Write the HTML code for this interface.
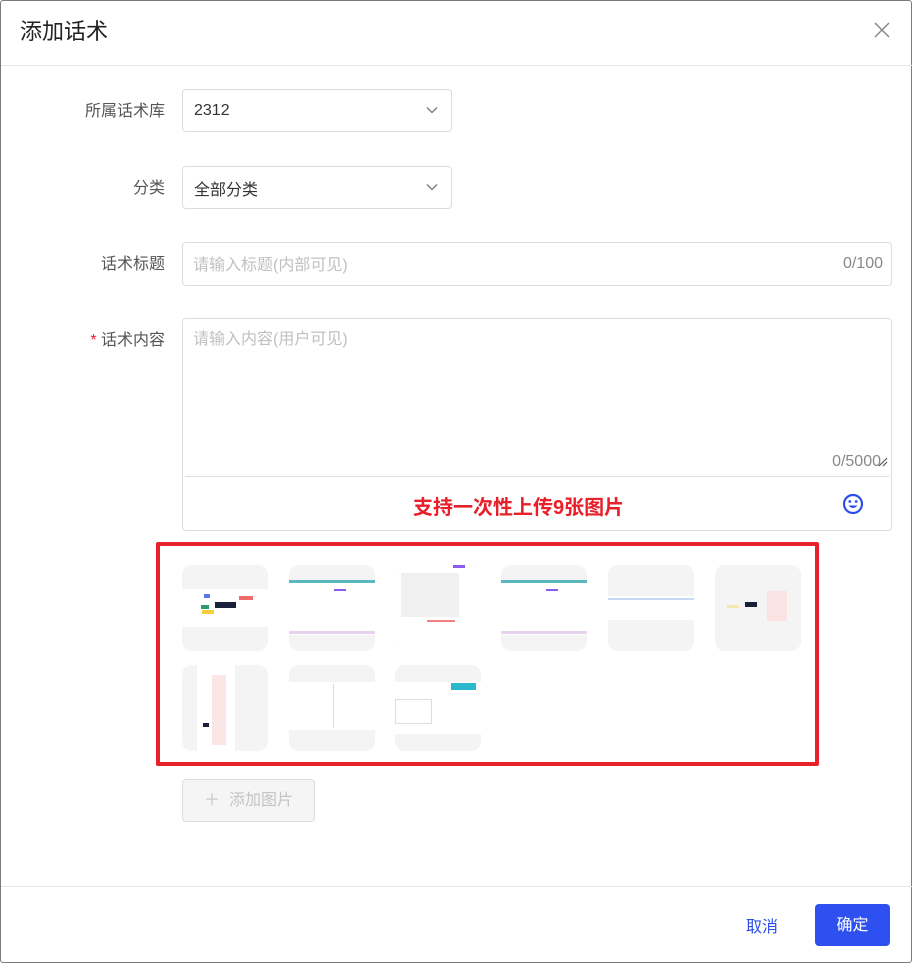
<!DOCTYPE html>
<html><head><meta charset="utf-8"><style>
*{margin:0;padding:0;box-sizing:border-box}
body{width:913px;height:964px;background:#fff;font-family:"Liberation Sans","Noto Sans CJK SC",sans-serif;position:relative;overflow:hidden;color:#333}
.frame{position:absolute;left:0;top:0;width:912px;height:963px;border:1px solid #7a7a7a;border-radius:3px}
.a{position:absolute}
.title{left:20px;top:14px;font-size:22px;color:#222}
.hr{left:1px;right:1px;height:1px;background:#e6e6e6}
.lbl{font-size:16px;color:#555;width:165px;text-align:right;left:0}
.inp{border:1px solid #dcdcdc;border-radius:4px;background:#fff}
.ph{color:#c0c0c0;font-size:16px}
.th{width:86px;height:86px;border-radius:10px;background:#f4f4f4;overflow:hidden}
.th i{position:absolute;display:block}
</style></head><body>
<div class="frame"></div>
<div class="a title">添加话术</div>
<svg class="a" style="left:873px;top:21px" width="18" height="18" viewBox="0 0 18 18"><path d="M2 2L16 16M16 2L2 16" stroke="#888" stroke-width="1.5"/></svg>
<div class="a hr" style="top:65px"></div>

<div class="a lbl" style="top:97px">所属话术库</div>
<div class="a inp" style="left:182px;top:89px;width:270px;height:43px"><span class="a" style="left:11px;top:12px;font-size:16px;color:#333">2312</span>
<svg class="a" style="left:243px;top:16px" width="12" height="8" viewBox="0 0 12 8"><path d="M1 1.5L6 6.5L11 1.5" stroke="#777" stroke-width="1.3" fill="none"/></svg></div>

<div class="a lbl" style="top:174px">分类</div>
<div class="a inp" style="left:182px;top:166px;width:270px;height:43px"><span class="a" style="left:11px;top:9px;font-size:16px;color:#333">全部分类</span>
<svg class="a" style="left:243px;top:16px" width="12" height="8" viewBox="0 0 12 8"><path d="M1 1.5L6 6.5L11 1.5" stroke="#777" stroke-width="1.3" fill="none"/></svg></div>

<div class="a lbl" style="top:250px">话术标题</div>
<div class="a inp" style="left:182px;top:242px;width:710px;height:44px"><span class="a ph" style="left:10px;top:8px">请输入标题(内部可见)</span><span class="a" style="right:8px;top:12px;font-size:16px;color:#888">0/100</span></div>

<div class="a lbl" style="top:326px"><span style="color:#e23">*</span> 话术内容</div>
<div class="a inp" style="left:182px;top:318px;width:710px;height:213px">
<span class="a ph" style="left:10px;top:6px">请输入内容(用户可见)</span>
<span class="a" style="right:10px;top:134px;font-size:16px;color:#888">0/5000</span>
<svg class="a" style="right:3px;top:138px" width="10" height="10" viewBox="0 0 10 10"><path d="M1 9L9 1M5 9L9 5" stroke="#555" stroke-width="1.2"/></svg>
<div class="a" style="left:2px;right:2px;top:157px;height:1px;background:#ddd"></div>
<div class="a" style="left:230px;top:172px;font-size:20px;font-weight:bold;color:#e8202a">支持一次性上传9张图片</div>
<svg class="a" style="left:659px;top:174px" width="22" height="22" viewBox="0 0 22 22"><circle cx="11" cy="11" r="9" stroke="#2b4de8" stroke-width="2.2" fill="none"/><circle cx="7.8" cy="8.5" r="1.4" fill="#2b4de8"/><circle cx="14.2" cy="8.5" r="1.4" fill="#2b4de8"/><path d="M6.5 12.5Q11 17.5 15.5 12.5Z" fill="#2b4de8"/></svg>
</div>

<div class="a" style="left:156px;top:542px;width:663px;height:224px;border:4px solid #e8202a;border-radius:2px"></div>

<div class="a th" style="left:182px;top:565px"><i style="left:0;top:24px;width:86px;height:38px;background:#fff"></i><i style="left:33px;top:37px;width:21px;height:6px;background:#1a1f3a"></i><i style="left:57px;top:31px;width:14px;height:4px;background:#f06a6a"></i><i style="left:20px;top:45px;width:12px;height:4px;background:#f2d23a"></i><i style="left:19px;top:40px;width:8px;height:4px;background:#2c9a6a"></i><i style="left:22px;top:29px;width:6px;height:4px;background:#5577ee"></i></div>
<div class="a th" style="left:289px;top:565px"><i style="left:0;top:15px;width:86px;height:55px;background:#fff"></i><i style="left:0;top:15px;width:86px;height:3px;background:#5bb8c0"></i><i style="left:0;top:66px;width:86px;height:3px;background:#e7d3ee"></i><i style="left:45px;top:24px;width:12px;height:2px;background:#8a5cf0"></i></div>
<div class="a th" style="left:395px;top:565px"><i style="left:0;top:0;width:86px;height:86px;background:#fff;border-radius:10px"></i><i style="left:6px;top:8px;width:58px;height:44px;background:#f0f0f0"></i><i style="left:58px;top:0;width:12px;height:3px;background:#8a5cf0"></i><i style="left:32px;top:55px;width:28px;height:2px;background:#f08080"></i></div>
<div class="a th" style="left:501px;top:565px"><i style="left:0;top:15px;width:86px;height:55px;background:#fff"></i><i style="left:0;top:15px;width:86px;height:3px;background:#5bb8c0"></i><i style="left:0;top:66px;width:86px;height:3px;background:#e7d3ee"></i><i style="left:45px;top:24px;width:12px;height:2px;background:#8a5cf0"></i></div>
<div class="a th" style="left:608px;top:565px"><i style="left:0;top:31px;width:86px;height:24px;background:#fff"></i><i style="left:0;top:33px;width:86px;height:2px;background:#c8d8f4"></i></div>
<div class="a th" style="left:715px;top:565px"><i style="left:30px;top:37px;width:12px;height:5px;background:#1a1f3a"></i><i style="left:52px;top:26px;width:20px;height:30px;background:#fbe3e3"></i><i style="left:12px;top:40px;width:12px;height:3px;background:#f6e6b0"></i></div>

<div class="a th" style="left:182px;top:665px"><i style="left:15px;top:0;width:38px;height:86px;background:#fff"></i><i style="left:21px;top:58px;width:6px;height:4px;background:#1a1f3a"></i><i style="left:30px;top:10px;width:14px;height:70px;background:#fbe6e6"></i></div>
<div class="a th" style="left:289px;top:665px"><i style="left:0;top:17px;width:86px;height:48px;background:#fff"></i><i style="left:44px;top:19px;width:1px;height:44px;background:#ddd"></i></div>
<div class="a th" style="left:395px;top:665px"><i style="left:0;top:17px;width:86px;height:52px;background:#fff"></i><i style="left:56px;top:18px;width:25px;height:7px;background:#2ab8d0"></i><i style="left:0;top:34px;width:37px;height:25px;border:1px solid #ddd"></i></div>

<div class="a" style="left:182px;top:779px;width:133px;height:43px;border:1px solid #ddd;border-radius:4px;background:#f5f5f5;color:#c4c4c4;font-size:16px;text-align:center;line-height:41px">＋&nbsp; 添加图片</div>

<div class="a hr" style="top:886px"></div>
<div class="a" style="left:746px;top:913px;font-size:16px;color:#2b4de8">取消</div>
<div class="a" style="left:815px;top:904px;width:75px;height:42px;background:#2f50f0;border-radius:4px;color:#fff;font-size:16px;text-align:center;line-height:44px">确定</div>
</body></html>
